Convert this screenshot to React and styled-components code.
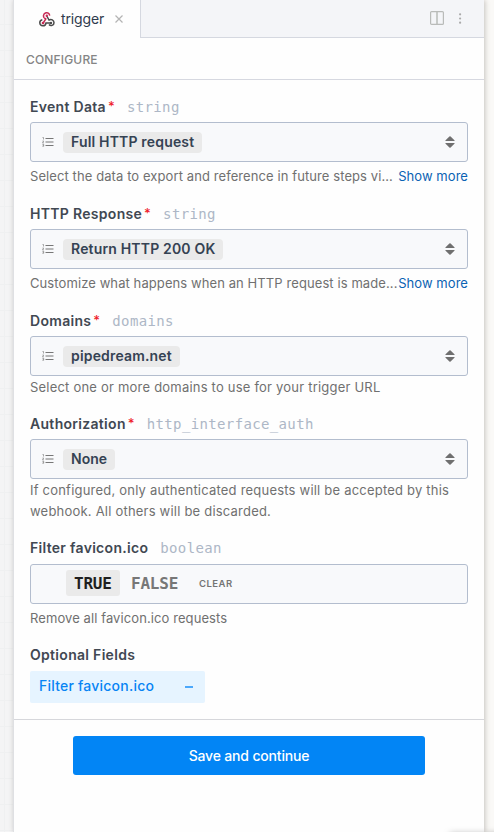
import React from "react";
import styled, { createGlobalStyle } from "styled-components";

const GlobalStyle = createGlobalStyle`
  *, *::before, *::after { box-sizing: border-box; }
  body {
    margin: 0;
    background: #faf9f7;
    font-family: Inter, "Liberation Sans", sans-serif;
    overflow: hidden;
  }
`;

const Page = styled.div`
  position: relative;
  display: flex;
  height: 832px;
  width: 494px;
  overflow: hidden;
`;

const CanvasEdge = styled.div`
  width: 13px;
  background-color: #f4f4f5;
  background-image: linear-gradient(#eff0f1 1px, transparent 1px),
    linear-gradient(90deg, #eff0f1 1px, transparent 1px);
  background-size: 26px 26px;
  background-position: 4px 24px;
`;

const Panel = styled.main`
  width: 471px;
  border-left: 1px solid #dfe0e3;
  background: #fefefe;
  box-shadow: 1px 0 5px rgba(60, 50, 40, 0.28);
`;

const FloatingShadow = styled.div`
  position: absolute;
  left: 450px;
  top: 834px;
  width: 60px;
  height: 20px;
  box-shadow: 0 0 7px rgba(0, 0, 0, 0.35);
`;

const TabBar = styled.header`
  display: flex;
  height: 38px;
`;

const Tab = styled.div`
  display: flex;
  align-items: center;
  width: 127px;
  padding-left: 25px;
  border-right: 1px solid #d5d8e0;
`;

const TabName = styled.span`
  margin: 0 11px 0 6px;
  font-size: 14px;
  line-height: 20px;
  letter-spacing: -0.13px;
  color: #2f3b4d;
`;

const TabTools = styled.div`
  display: flex;
  flex: 1;
  justify-content: flex-end;
  align-items: center;
  gap: 15px;
  padding: 0 22px 1px 0;
  background: #f4f5f8;
  border-bottom: 1px solid #d5d8e0;
`;

const SectionTitle = styled.div`
  height: 42px;
  padding: 1px 12px 0;
  border-bottom: 1px solid #d6d8e0;
  font-size: 12px;
  font-weight: 500;
  line-height: 42px;
  letter-spacing: 0.16px;
  color: #858585;
`;

const Form = styled.div`
  height: 640px;
  padding: 16px 16px 0;
  border-bottom: 1px solid #d6d7db;
`;

const Field = styled.section`
  margin-bottom: ${(p) => p.$after ?? 16}px;
`;

const Label = styled.div`
  display: flex;
  align-items: center;
  height: 22px;
  padding-bottom: 2px;
  margin-bottom: ${(p) => p.$gap ?? 4}px;
  font-size: 14px;
  font-weight: 600;
  letter-spacing: 0.3px;
  color: #414852;
  white-space: nowrap;
`;

const Required = styled.span`
  width: 7px;
  margin-left: 2px;
  color: #ef1d2b;
  font-size: 13px;
  font-weight: 500;
  letter-spacing: 0;
`;

const TypeName = styled.span`
  margin-left: 12px;
  padding-top: 2px;
  font-family: "DejaVu Sans Mono", monospace;
  font-size: 14px;
  font-weight: 400;
  letter-spacing: 0.36px;
  color: #adb7c6;
`;

const ControlBox = styled.div`
  display: flex;
  align-items: center;
  height: 40px;
  border: 1px solid #b3bdce;
  border-radius: 3px;
  background: #f8f9fb;
  padding: 0 12px 0 11px;
`;

const Value = styled.span`
  height: 21px;
  padding: 0 8px;
  margin: 0 auto 0 9px;
  border-radius: 4px;
  background: #eaeaea;
  color: #354253;
  font-size: 14px;
  font-weight: 600;
  line-height: 20px;
  letter-spacing: ${(p) => p.$spacing ?? 0.17}px;
  white-space: nowrap;
`;

const Help = styled.div`
  display: flex;
  justify-content: space-between;
  padding-top: ${(p) => p.$gap ?? 4}px;
  font-size: 13px;
  line-height: 21px;
  letter-spacing: ${(p) => p.$spacing ?? 0.09}px;
  color: #707070;
  white-space: nowrap;
`;

const MoreLink = styled.a`
  color: #0b62b3;
  font-size: 13px;
  letter-spacing: 0.05px;
`;

const BooleanBox = styled(ControlBox)`
  padding: 0 12px 2px 35px;
`;

const BooleanOption = styled.span`
  width: ${(p) => (p.$selected ? "54px" : "69px")};
  height: 26px;
  padding-left: ${(p) => (p.$selected ? "8px" : "11px")};
  border-radius: 3px;
  background: ${(p) => (p.$selected ? "#eaeaea" : "transparent")};
  color: ${(p) => (p.$selected ? "#1f1f1f" : "#777")};
  font-family: "DejaVu Sans Mono", monospace;
  font-size: 16px;
  font-weight: 700;
  line-height: 27px;
  letter-spacing: -0.2px;
`;

const Clear = styled.span`
  margin-left: 10px;
  font-size: 9.5px;
  font-weight: 600;
  letter-spacing: 0.5px;
  color: #747474;
`;

const OptionalField = styled.button`
  display: flex;
  align-items: center;
  justify-content: space-between;
  width: 175px;
  height: 32px;
  padding: 0 12px 3px 9px;
  border: 0;
  border-radius: 2px;
  background: #e6f4ff;
  color: #0784f4;
  font: 500 14px Inter, sans-serif;
  letter-spacing: 0.22px;
`;

const Minus = styled.span`
  width: 8px;
  height: 1.5px;
  margin-top: 3px;
  background: #4ca8fb;
`;

const Footer = styled.footer`
  display: flex;
  justify-content: center;
  padding-top: 16px;
`;

const SaveButton = styled.button`
  width: 352px;
  height: 39px;
  padding: 0 0 1px;
  border: 0;
  border-radius: 3px;
  background: #0285f5;
  color: #fff;
  font: 500 14px Inter, sans-serif;
  letter-spacing: -0.17px;
`;

function WebhookIcon() {
  return (
    <svg width="16" height="15" viewBox="0 0 16 15" fill="none" strokeWidth="1.5">
      <path d="M5.2 5.8a3.1 3.1 0 1 1 5.5-2.2" stroke="#c72b55" />
      <path d="M5.2 5.8 6.8 7 4.2 11" stroke="#c72b55" />
      <path d="M7.8 4 10 8c2.2-1.4 5 0 5 2.7 0 2.8-3.4 3.8-5 1.8" stroke="#4b4b4b" />
      <path d="M3.3 7.7C-.3 8.4.1 13.8 3.8 13.8c2 0 3.1-1.2 3.2-2.9h5" stroke="#4b4b4b" />
      <circle cx="7.8" cy="3.8" r="1.2" fill="#c72b55" />
      <circle cx="4" cy="11" r="1.3" fill="#c72b55" />
      <circle cx="12" cy="11" r="1.2" fill="#4b4b4b" />
    </svg>
  );
}

function CloseIcon() {
  return (
    <svg width="8" height="8" viewBox="0 0 8 8" stroke="#b4b4b4" strokeWidth="1.2">
      <path d="m.5.5 7 7m0-7-7 7" />
    </svg>
  );
}

function SplitIcon() {
  return (
    <svg width="14" height="14" viewBox="0 0 14 14" fill="none" stroke="#b9bbb9" strokeWidth="1.2">
      <rect x=".6" y=".6" width="12.8" height="12.8" rx="1" />
      <path d="M7 1v12" strokeWidth="1.5" />
    </svg>
  );
}

function MoreIcon() {
  return (
    <svg width="3" height="11" viewBox="0 0 3 11" fill="#aaa">
      <circle cx="1.1" cy="1.3" r="1.1" />
      <circle cx="1.1" cy="5.5" r="1.1" />
      <circle cx="1.1" cy="9.7" r="1.1" />
    </svg>
  );
}

function ListIcon() {
  return (
    <svg width="12" height="10" viewBox="0 0 12 10" fill="none" stroke="#777" strokeWidth="1">
      <path d="M3.5 1.5h8M3.5 5h8M3.5 8.5h8" />
      <path d="M.5.5h1v2M.5 4h1.2L.5 5.8h1.4M.4 7.3h1.3v2H.4m.4-1h.9" strokeWidth=".65" />
    </svg>
  );
}

function SortIcon() {
  return (
    <svg width="10" height="12" viewBox="0 0 10 12" fill="#6f6f6f">
      <path d="M4.4.5.6 4.2c-.5.5-.2.9.4.9h8c.6 0 .9-.4.4-.9L5.6.5a.8.8 0 0 0-1.2 0Z" />
      <path d="M4.4 11.5.6 7.8C.1 7.3.4 6.9 1 6.9h8c.6 0 .9.4.4.9l-3.8 3.7a.8.8 0 0 1-1.2 0Z" />
    </svg>
  );
}

const fields = [
  {
    label: "Event Data", type: "string", value: "Full HTTP request",
    help: ["Select the data to export and reference in future steps vi..."], more: true,
  },
  {
    label: "HTTP Response", type: "string", value: "Return HTTP 200 OK",
    help: ["Customize what happens when an HTTP request is made..."], more: true,
  },
  {
    label: "Domains", type: "domains", value: "pipedream.net",
    help: ["Select one or more domains to use for your trigger URL"], helpSpacing: 0.21,
  },
  {
    label: "Authorization", type: "http_interface_auth", value: "None", valueSpacing: 0.02,
    help: ["If configured, only authenticated requests will be accepted by this", "webhook. All others will be discarded."],
    helpSpacing: 0.21,
  },
];

function SelectField({ field }) {
  return (
    <Field $after={field.more ? 16 : 15}>
      <Label>
        {field.label}<Required>*</Required><TypeName>{field.type}</TypeName>
      </Label>
      <ControlBox>
        <ListIcon />
        <Value $spacing={field.valueSpacing}>{field.value}</Value>
        <SortIcon />
      </ControlBox>
      {field.help.map((line, i) => (
        <Help key={line} $gap={field.more ? 4 : i === 0 ? 1 : 0} $spacing={field.helpSpacing}>
          <span>{line}</span>{field.more && <MoreLink>Show more</MoreLink>}
        </Help>
      ))}
    </Field>
  );
}

export default function App() {
  return (
    <>
      <GlobalStyle />
      <Page>
        <CanvasEdge />
        <Panel>
          <TabBar>
            <Tab><WebhookIcon /><TabName>trigger</TabName><CloseIcon /></Tab>
            <TabTools><SplitIcon /><MoreIcon /></TabTools>
          </TabBar>
          <SectionTitle>CONFIGURE</SectionTitle>
          <Form>
            {fields.map((field) => <SelectField key={field.label} field={field} />)}
            <Field $after={15}>
              <Label $gap={5}>Filter favicon.ico<TypeName>boolean</TypeName></Label>
              <BooleanBox>
                <BooleanOption $selected>TRUE</BooleanOption>
                <BooleanOption>FALSE</BooleanOption>
                <Clear>CLEAR</Clear>
              </BooleanBox>
              <Help>Remove all favicon.ico requests</Help>
            </Field>
            <Label $gap={5}>Optional Fields</Label>
            <OptionalField>Filter favicon.ico<Minus /></OptionalField>
          </Form>
          <Footer><SaveButton>Save and continue</SaveButton></Footer>
        </Panel>
        <FloatingShadow />
      </Page>
    </>
  );
}
